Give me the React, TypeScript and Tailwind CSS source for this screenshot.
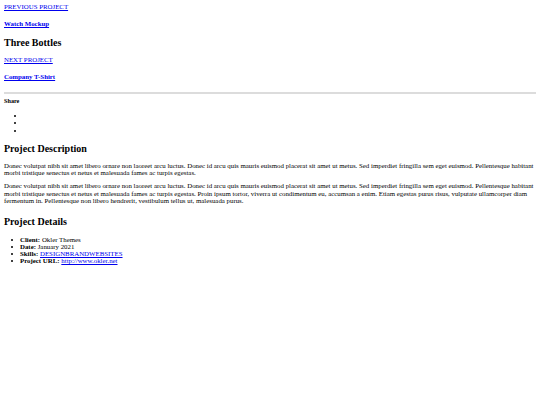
function Dot({ width }: { width: string }) {
  return (
    <span className={`flex shrink-0 items-center ${width}`}>
      <span className="mt-[1px] inline-block h-[2.3px] w-[2.3px] rounded-full bg-black" />
    </span>
  )
}

export default function App() {
  const text1 =
    'Donec volutpat nibh sit amet libero ornare non laoreet arcu luctus. Donec id arcu quis mauris euismod placerat sit amet ut metus. Sed imperdiet fringilla sem eget euismod. Pellentesque habitant morbi tristique senectus et netus et malesuada fames ac turpis egestas.'
  const text2 =
    text1 +
    ' Proin ipsum tortor, viverra ut condimentum eu, accumsan a enim. Etiam egestas purus risus, vulputate ullamcorper diam fermentum in. Pellentesque non libero hendrerit, vestibulum tellus ut, malesuada purus.'

  const details = [
    { label: 'Client:', value: 'Okler Themes' },
    { label: 'Date:', value: 'January 2021' },
  ]

  return (
    <div className="min-h-[405px] bg-white px-[4px] pt-[3.4px] font-['Liberation_Serif',serif] text-[6.85px] leading-[7.5px] text-black">
      {/* Previous / next navigation */}
      <div>
        <a href="#" className="text-[#0000ee] underline">PREVIOUS PROJECT</a>
      </div>
      <h4 className="mt-[9.5px] font-bold">
        <a href="#" className="text-[#0000ee] underline">Watch Mockup</a>
      </h4>
      <h2 className="mt-[9.2px] text-[10px] leading-[12px] font-bold">Three Bottles</h2>
      <div className="mt-[7.3px]">
        <a href="#" className="text-[#0000ee] underline">NEXT PROJECT</a>
      </div>
      <h4 className="mt-[9.5px] font-bold">
        <a href="#" className="text-[#0000ee] underline">Company T-Shirt</a>
      </h4>

      <hr className="mt-[11.1px] border-t-2 border-[#dcdcdc]" />

      {/* Share */}
      <h5 className="mt-[2.9px] text-[6.2px] leading-[7px] font-bold">Share</h5>
      <ul className="mt-[7.6px] pl-[10px]">
        {[0, 1, 2].map((i) => (
          <li key={i} className="flex">
            <Dot width="w-[8px]" />
            <span>&nbsp;</span>
          </li>
        ))}
      </ul>

      {/* Description */}
      <h2 className="mt-[9.2px] text-[10px] leading-[12px] font-bold">Project Description</h2>
      <p className="mt-[6.8px]">{text1}</p>
      <p className="mt-[5.2px]">{text2}</p>

      {/* Details */}
      <h2 className="mt-[11.7px] text-[10px] leading-[12px] font-bold">Project Details</h2>
      <ul className="mt-[7.3px] pl-[7px] leading-[7.2px]">
        {details.map((d) => (
          <li key={d.label} className="flex">
            <Dot width="w-[9px]" />
            <span>
              <strong>{d.label}</strong> {d.value}
            </span>
          </li>
        ))}
        <li className="flex">
          <Dot width="w-[9px]" />
          <span>
            <strong>Skills:</strong>{' '}
            <a href="#" className="text-[#0000ee] underline">DESIGN</a>
            <a href="#" className="text-[#0000ee] underline">BRAND</a>
            <a href="#" className="text-[#0000ee] underline">WEBSITES</a>
          </span>
        </li>
        <li className="flex">
          <Dot width="w-[9px]" />
          <span>
            <strong>Project URL:</strong>{' '}
            <a href="#" className="text-[#0000ee] underline">http://www.okler.net</a>
          </span>
        </li>
      </ul>
    </div>
  )
}
